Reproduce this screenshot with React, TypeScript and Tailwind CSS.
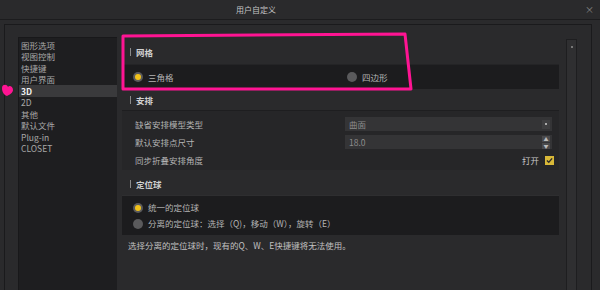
import React from "react";

const menu = ["图形选项", "视图控制", "快捷键", "用户界面", "3D", "2D", "其他", "默认文件", "Plug-in", "CLOSET"];

function Radio({ on }: { on?: boolean }) {
  return (
    <span className="w-[10px] h-[10px] rounded-full bg-[#5a5a5c] flex items-center justify-center shrink-0">
      {on && <span className="w-[6px] h-[6px] rounded-full bg-[#f2c21a]" />}
    </span>
  );
}

function SectionTitle({ title }: { title: string }) {
  return (
    <div className="h-[20px] flex items-center gap-[5px] pl-[8px] text-[8.5px] leading-none font-bold text-[#d0d0d0]">
      <span className="w-[1px] h-[8px] bg-[#8a8a8a]" />
      {title}
    </div>
  );
}

export default function App() {
  return (
    <div
      className="relative w-[600px] h-[290px] overflow-hidden bg-[#2a2a2c] text-[#b4b4b4]"
      style={{ fontFamily: '"Noto Sans CJK SC", "Noto Sans", sans-serif' }}
    >
      {/* Title bar */}
      <div className="relative h-[20px] flex items-center pl-[236px] border-b border-[#1c1c1e] text-[8px] leading-none text-[#c4c4c4]">
        用户自定义
        <span className="absolute right-[6px] top-[5px] text-[9px] leading-none text-[#8a8a8a]">×</span>
      </div>

      {/* Frame */}
      <div className="mt-[4px] ml-[4px] mr-[8px] h-[270px] border-t border-l border-r border-[#1a1a1c] flex">
        {/* Left list */}
        <div className="ml-[13px] mt-[12px] w-[99px] bg-[#1e1e20] border-l border-t border-[#18181a] pt-[1px]">
          {menu.map((m) => (
            <div
              key={m}
              className={`h-[11.55px] flex items-center pl-[2px] text-[8.5px] leading-none ${
                m === "3D" ? "bg-[#3a3a3c] text-[#f0f0f0] font-bold" : "text-[#a8a8a8]"
              }`}
            >
              {m}
            </div>
          ))}
        </div>

        {/* Content */}
        <div className="flex-1 flex ml-[3px] mt-[14px]">
          <div className="flex-1 pl-[2px] pr-[7px]">
            <div className="h-[3px]" />
            <SectionTitle title="网格" />
            <div className="mt-[2px] h-[25px] bg-[#1c1c1e] border-t border-[#242426] flex items-center text-[8.5px] leading-none">
              <div className="flex items-center gap-[5px] pl-[11px] w-[225px]">
                <Radio on />
                <span>三角格</span>
              </div>
              <div className="flex items-center gap-[5px]">
                <Radio />
                <span>四边形</span>
              </div>
            </div>

            <div className="h-[1px]" />
            <SectionTitle title="安排" />
            <div className="h-[60px] bg-[#262628] border-t border-[#1e1e20] text-[8.5px] leading-none pl-[13px] pr-[7px] pt-[6px] flex flex-col gap-[4px]">
              <div className="flex items-center h-[14px]">
                <span className="w-[210px]">缺省安排模型类型</span>
                <div className="flex-1 h-[14px] bg-[#343436] flex items-center justify-between pl-[4px] pr-[2px] text-[#8c8c8c]">
                  曲面
                  <span className="w-[8px] h-[9px] bg-[#3e3e40] flex items-center justify-center">
                    <span className="w-[2px] h-[2px] bg-[#aaa]" />
                  </span>
                </div>
              </div>
              <div className="flex items-center h-[14px]">
                <span className="w-[210px]">默认安排点尺寸</span>
                <div className="flex-1 h-[14px] bg-[#343436] flex items-center justify-between pl-[4px] pr-[2px] text-[#8c8c8c]">
                  18.0
                  <span className="flex flex-col gap-[1px]">
                    <span className="w-[8px] h-[6px] bg-[#4a4a4c] flex items-center justify-center text-[5px] leading-none text-[#bbb]">▲</span>
                    <span className="w-[8px] h-[6px] bg-[#4a4a4c] flex items-center justify-center text-[5px] leading-none text-[#bbb]">▼</span>
                  </span>
                </div>
              </div>
              <div className="flex items-center h-[14px]">
                <span className="flex-1">同步折叠安排角度</span>
                <span className="mr-[6px] text-[#c8c8c8]">打开</span>
                <span className="w-[9px] h-[9px] bg-[#d8b838] flex items-center justify-center -mr-[2px]">
                  <svg width="7" height="7" viewBox="0 0 8 8">
                    <path d="M1 4 L3.2 6 L7 1.5" stroke="#2a2a2a" strokeWidth="1.5" fill="none" />
                  </svg>
                </span>
              </div>
            </div>

            <div className="h-[4px]" />
            <SectionTitle title="定位球" />
            <div className="mt-[1px] h-[40px] bg-[#1c1c1e] border-t border-[#2e2e30] text-[8.5px] leading-none pl-[11px] flex flex-col justify-center gap-[6px]">
              <div className="flex items-center gap-[5px] h-[10px]">
                <Radio on />
                <span>统一的定位球</span>
              </div>
              <div className="flex items-center gap-[5px] h-[10px]">
                <Radio />
                <span>分离的定位球：选择（Q)，移动（W），旋转（E）</span>
              </div>
            </div>
            <div className="mt-[6px] pl-[6px] text-[8.5px] leading-none text-[#c0c0c0]">
              选择分离的定位球时，现有的Q、W、E快捷键将无法使用。
            </div>
          </div>

          {/* Scrollbar */}
          <div className="w-[11px] bg-[#2f2f31] border border-[#1e1e20] flex flex-col items-center pt-[6px]">
            <span className="w-[2px] h-[2px] bg-[#777]" />
          </div>
          <div className="w-[14px]" />
        </div>
      </div>

      {/* Annotation overlays */}
      <svg className="absolute left-0 top-0 pointer-events-none" width="600" height="290">
        <polygon points="123,36 405,34 411,89 123,89" fill="none" stroke="#ff1493" strokeWidth="3" strokeLinejoin="round" />
        <path d="M2 88 C2 84 7 84 8 87 C9 85 13 86 13 90 C13 93 9 95 7 96 C4 95 2 92 2 88 Z" fill="#ff1493" />
      </svg>
    </div>
  );
}
